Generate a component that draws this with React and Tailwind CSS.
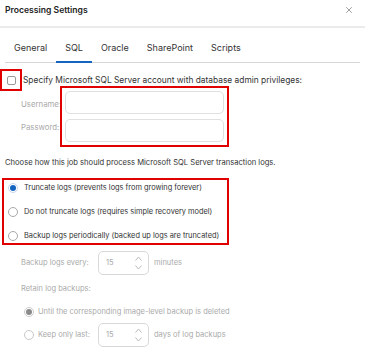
import { X } from 'lucide-react';

const font = { fontFamily: 'Inter, "Noto Sans", sans-serif' };

function Spinner({ value }) {
  return (
    <div className="relative flex h-[24px] w-[51px] items-center rounded-[5px] border border-[#d9d9d9] bg-white pl-[7px] text-[#aaa]">
      <span>{value}</span>
      <div className="absolute right-[6px] top-[4px] flex flex-col items-center gap-[4px]">
        <svg width="7" height="5" viewBox="0 0 7 5" fill="none" stroke="#bbb" strokeWidth="1">
          <path d="M0.5 4.5 L3.5 1 L6.5 4.5" />
        </svg>
        <svg width="7" height="5" viewBox="0 0 7 5" fill="none" stroke="#bbb" strokeWidth="1">
          <path d="M0.5 0.5 L3.5 4 L6.5 0.5" />
        </svg>
      </div>
    </div>
  );
}

function Radio({ checked, disabled }) {
  if (checked) {
    return (
      <span
        className={`flex h-[10px] w-[10px] shrink-0 items-center justify-center rounded-full border ${
          disabled ? 'border-[#ccc]' : 'border-[#c9d8ee]'
        }`}
      >
        <span className={`h-[6px] w-[6px] rounded-full ${disabled ? 'bg-[#8a8a8a]' : 'bg-[#1565c0]'}`} />
      </span>
    );
  }
  return (
    <span
      className={`h-[10px] w-[10px] shrink-0 rounded-full border ${disabled ? 'border-[#c8c8c8]' : 'border-[#a8a8a8]'}`}
    />
  );
}

export default function App() {
  const tabs = ['General', 'SQL', 'Oracle', 'SharePoint', 'Scripts'];

  return (
    <div
      className="h-[364px] w-[365px] overflow-hidden whitespace-nowrap bg-white text-[7.5px] leading-[12px] text-[#333]"
      style={font}
    >
      {/* header */}
      <div className="flex h-[26px] items-start justify-between pl-[5px] pr-[11px] pt-[4px]">
        <h1 className="text-[8.6px] font-semibold text-[#222]">Processing Settings</h1>
        <X className="mt-[1px] h-[10px] w-[10px] text-[#666]" strokeWidth={1.5} />
      </div>
      <div className="h-[2px] bg-[#ebebeb]" />

      {/* tabs */}
      <div className="mx-[5px] mt-[14px] flex border-b border-[#d6d6d6] text-[9px] text-[#333]">
        {tabs.map((t) => (
          <div
            key={t}
            className={`px-[9px] pb-[7px] ${t === 'SQL' ? '-mb-[1px] border-b-2 border-[#1565c0] pb-[6px]' : ''}`}
          >
            {t}
          </div>
        ))}
      </div>

      {/* account */}
      <div className="mt-[6px] flex items-center">
        <div className="flex h-[22px] w-[22px] items-center justify-center border-2 border-[#e00000]">
          <span className="h-[9px] w-[9px] rounded-[2px] border border-[#999]" />
        </div>
        <span className="ml-[1px] text-[8.4px]">Specify Microsoft SQL Server account with database admin privileges:</span>
      </div>

      <div className="flex">
        <div className="flex w-[60px] flex-col pl-[21px] pt-[7px] text-[7.8px] text-[#aaa]">
          <span className="h-[23px] leading-[12px]">Username:</span>
          <span>Password:</span>
        </div>
        <div className="-mt-[5px] flex w-[169px] flex-col gap-[5px] border-2 border-[#e00000] px-[3px] py-[3px]">
          <div className="h-[23px] rounded-[5px] border border-[#e0e0e0]" />
          <div className="h-[23px] rounded-[5px] border border-[#e0e0e0]" />
        </div>
      </div>

      <p className="mt-[10px] pl-[5px] text-[7.6px]">
        Choose how this job should process Microsoft SQL Server transaction logs.
      </p>

      <div className="ml-[2px] mt-[9px] flex w-[227px] flex-col gap-[12px] border-2 border-[#e00000] pb-[1px] pl-[4px] pt-[2px] text-[7.4px]">
        <label className="flex h-[12px] items-center gap-[6px]">
          <Radio checked />
          <span>Truncate logs (prevents logs from growing forever)</span>
        </label>
        <label className="flex h-[12px] items-center gap-[6px]">
          <Radio />
          <span>Do not truncate logs (requires simple recovery model)</span>
        </label>
        <label className="flex h-[12px] items-center gap-[6px]">
          <Radio />
          <span>Backup logs periodically (backed up logs are truncated)</span>
        </label>
      </div>

      <div className="pl-[21px] text-[#aaa]">
        <div className="mt-[6px] flex items-center">
          <span className="w-[77px]">Backup logs every:</span>
          <Spinner value="15" />
          <span className="ml-[5px]">minutes</span>
        </div>
        <p className="mt-[8px]">Retain log backups:</p>
        <div className="mt-[11px] flex h-[12px] items-center gap-[4px] pl-[3px]">
          <Radio checked disabled />
          <span>Until the corresponding image-level backup is deleted</span>
        </div>
        <div className="mt-[5px] flex items-center pl-[3px]">
          <Radio disabled />
          <span className="ml-[4px] w-[60px]">Keep only last:</span>
          <Spinner value="15" />
          <span className="ml-[5px]">days of log backups</span>
        </div>
      </div>
    </div>
  );
}
